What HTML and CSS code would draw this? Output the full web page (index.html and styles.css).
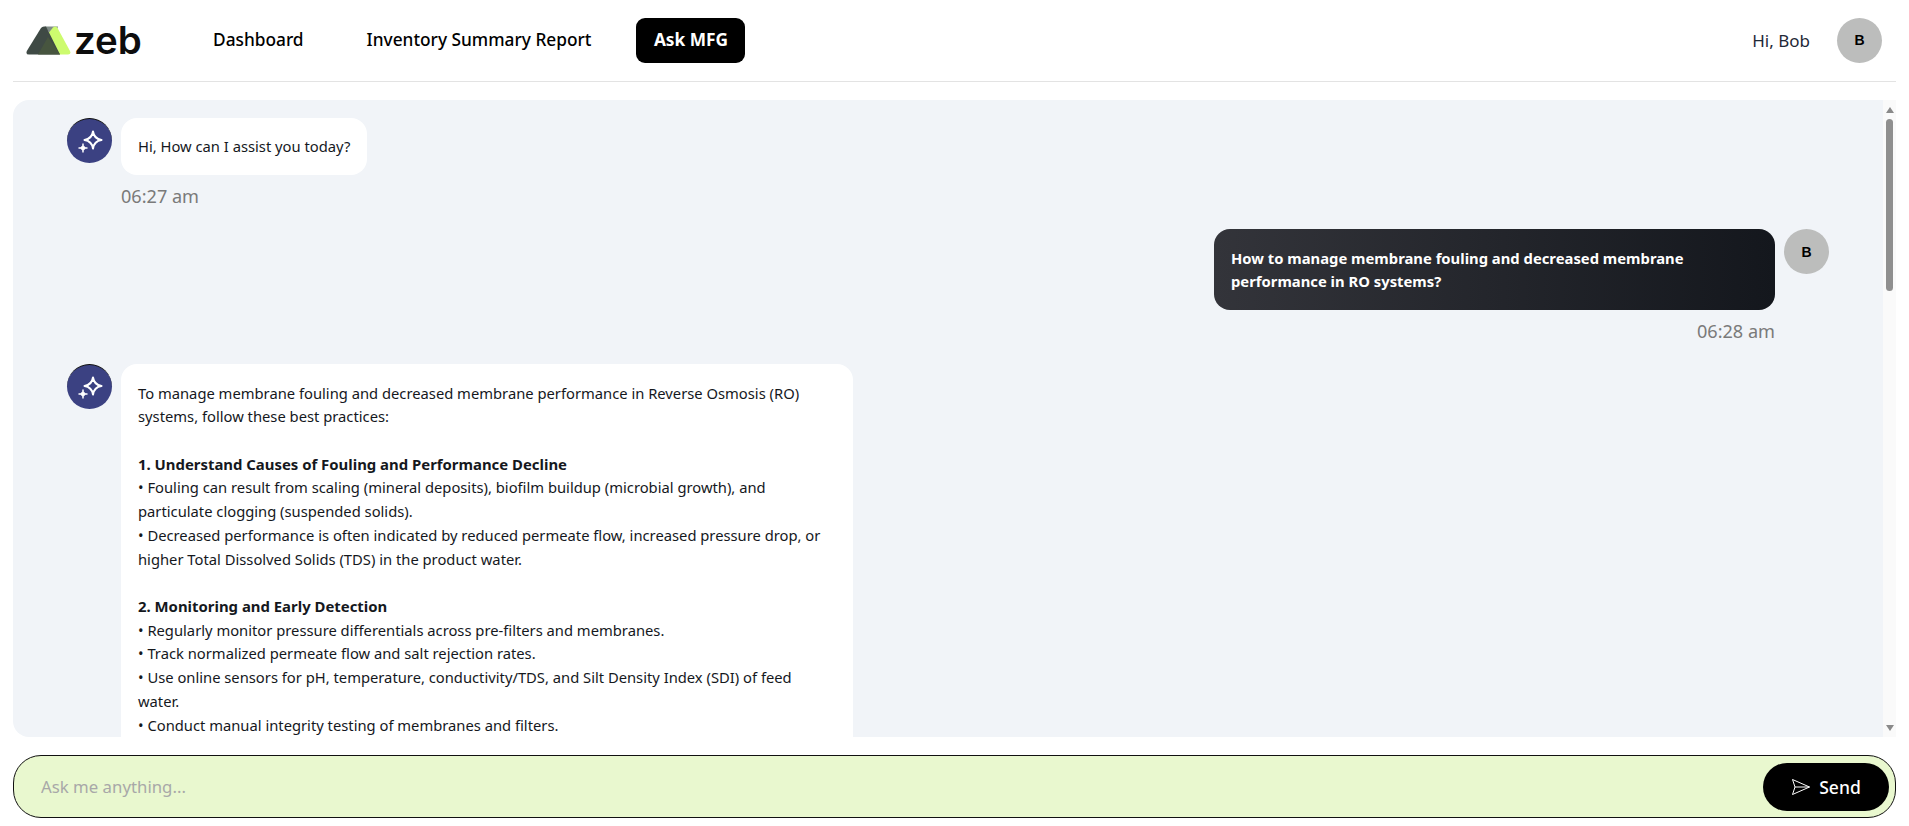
FILE: index.html
```html
<!DOCTYPE html>
<html lang="en">
<head>
<meta charset="utf-8">
<title>Ask MFG</title>
<link rel="stylesheet" href="styles.css">
</head>
<body>
<div class="app">
  <header class="topbar">
    <div class="brand">
      <svg class="brand-mark" width="45" height="29" viewBox="0 0 45 29">
        <path d="M19 0.5 L32 0.5 L28 14 Z" fill="#7f8b86"/>
        <path d="M27 1.5 Q29.5 -0.5 31.5 2 L44 25 Q45.5 28.5 42 28.5 L33 28.5 L21 9 Z" fill="#cdfb6e"/>
        <path d="M15 2 Q16 0.5 18 0.5 L20 0.5 L34 28.5 L3 28.5 Q-0.5 28.5 0.8 25 Z" fill="#3f4a45"/>
        <path d="M22 11 L34 28.5 L12 28.5 Z" fill="#47553f"/>
      </svg>
      <span class="brand-name">zeb</span>
    </div>
    <nav class="nav">
      <a class="nav-link">Dashboard</a>
      <a class="nav-link">Inventory Summary Report</a>
      <a class="nav-link nav-active">Ask MFG</a>
    </nav>
    <div class="user">
      <span class="greeting">Hi, Bob</span>
      <span class="avatar avatar-user">B</span>
    </div>
  </header>

  <div class="chat-frame">
    <main class="chat">
      <div class="msg">
        <span class="avatar avatar-bot">
          <svg width="45" height="45" viewBox="0 0 45 45" fill="none"><path d="M26 12.5 C26.8 17.8 29.2 20.2 34.5 21 C29.2 21.8 26.8 24.2 26 29.5 C25.2 24.2 22.8 21.8 17.5 21 C22.8 20.2 25.2 17.8 26 12.5 Z" stroke="#fff" stroke-width="2" stroke-linejoin="round"/><path d="M16 24.5 C16.4 27.5 17.5 28.6 20.5 29 C17.5 29.4 16.4 30.5 16 33.5 C15.6 30.5 14.5 29.4 11.5 29 C14.5 28.6 15.6 27.5 16 24.5 Z" fill="#fff" stroke="#fff" stroke-width=".8" stroke-linejoin="round"/></svg>
        </span>
        <div class="msg-body">
          <div class="bubble">Hi, How can I assist you today?</div>
          <div class="time">06:27 am</div>
        </div>
      </div>

      <div class="msg msg-out">
        <div class="msg-body">
          <div class="bubble bubble-out">How to manage membrane fouling and decreased membrane performance in RO systems?</div>
          <div class="time">06:28 am</div>
        </div>
        <span class="avatar avatar-user">B</span>
      </div>

      <div class="msg">
        <span class="avatar avatar-bot">
          <svg width="45" height="45" viewBox="0 0 45 45" fill="none"><path d="M26 12.5 C26.8 17.8 29.2 20.2 34.5 21 C29.2 21.8 26.8 24.2 26 29.5 C25.2 24.2 22.8 21.8 17.5 21 C22.8 20.2 25.2 17.8 26 12.5 Z" stroke="#fff" stroke-width="2" stroke-linejoin="round"/><path d="M16 24.5 C16.4 27.5 17.5 28.6 20.5 29 C17.5 29.4 16.4 30.5 16 33.5 C15.6 30.5 14.5 29.4 11.5 29 C14.5 28.6 15.6 27.5 16 24.5 Z" fill="#fff" stroke="#fff" stroke-width=".8" stroke-linejoin="round"/></svg>
        </span>
        <div class="msg-body">
          <div class="bubble bubble-long">To manage membrane fouling and decreased membrane performance in Reverse Osmosis (RO) systems, follow these best practices:<br><br><b>1. Understand Causes of Fouling and Performance Decline</b><br>• Fouling can result from scaling (mineral deposits), biofilm buildup (microbial growth), and particulate clogging (suspended solids).<br>• Decreased performance is often indicated by reduced permeate flow, increased pressure drop, or higher Total Dissolved Solids (TDS) in the product water.<br><br><b>2. Monitoring and Early Detection</b><br>• Regularly monitor pressure differentials across pre-filters and membranes.<br>• Track normalized permeate flow and salt rejection rates.<br>• Use online sensors for pH, temperature, conductivity/TDS, and Silt Density Index (SDI) of feed water.<br>• Conduct manual integrity testing of membranes and filters.</div>
        </div>
      </div>
    </main>
    <div class="scrollbar" aria-hidden="true">
      <span class="scroll-arrow scroll-up"></span>
      <span class="scroll-thumb"></span>
      <span class="scroll-arrow scroll-down"></span>
    </div>
  </div>

  <form class="composer">
    <input class="composer-input" type="text" placeholder="Ask me anything...">
    <button class="send" type="button">
      <svg width="20" height="18" viewBox="0 0 20 18" fill="none"><path d="M1.5 1.5 L18.5 9 L1.5 16.5 L4 9 Z M4 9 L18.5 9" stroke="#fff" stroke-width="1" stroke-linejoin="round"/></svg>
      <span>Send</span>
    </button>
  </form>
</div>
</body>
</html>
```
FILE: styles.css
```css
* { box-sizing: border-box; }
html, body { height: 100%; }
body {
  margin: 0;
  background: #fff;
  color: #15181d;
  font-family: "Noto Sans", "Open Sans", sans-serif;
  overflow: hidden;
}
.app {
  height: 826px;
  padding: 0 13px;
  display: flex;
  flex-direction: column;
}
.topbar {
  height: 82px;
  flex: none;
  display: flex;
  align-items: center;
  border-bottom: 1px solid #e3e3e3;
  padding: 0 14px 1px 13px;
}
.brand { display: flex; align-items: center; gap: 3px; width: 187px; }
.brand-mark { display: block; }
.brand-name {
  font-family: Inter, sans-serif;
  font-weight: 600;
  font-size: 38.5px;
  line-height: 40px;
  color: #0d0d0d;
}
.nav { display: flex; align-items: center; gap: 45px; flex: 1; }
.nav-link {
  font-size: 17.3px;
  font-weight: 500;
  color: #000;
  white-space: nowrap;
  margin-right: 18px;
  padding-bottom: 2px;
}
.nav-link + .nav-link + .nav-link { margin-left: -18px; }
.nav-active {
  margin-right: 0;
  background: #000;
  color: #fff;
  font-weight: 700;
  height: 45px;
  width: 109px;
  border-radius: 9px;
  display: flex;
  align-items: center;
  justify-content: center;
}
.user { display: flex; align-items: center; gap: 27px; }
.greeting { font-size: 17px; color: #1f2937; }
.avatar {
  width: 45px;
  height: 45px;
  border-radius: 50%;
  flex: none;
  display: flex;
  align-items: center;
  justify-content: center;
}
.avatar-user {
  background: #bcbdbc;
  color: #000;
  font: 700 14px "Liberation Sans", sans-serif;
}
.avatar-bot { background: #3b4182; border-top: 1px solid #111; }
.chat-frame {
  flex: none;
  height: 637px;
  margin-top: 18px;
  display: flex;
}
.chat {
  flex: 1;
  min-width: 0;
  padding: 18px 54px 0 54px;
  background: #f1f4f8;
  border-radius: 16px 0 0 16px;
  overflow: hidden;
}
.scrollbar {
  flex: none;
  width: 13px;
  background: #fafafa;
  display: flex;
  flex-direction: column;
  align-items: center;
  padding: 7px 0 6px;
}
.scroll-arrow {
  flex: none;
  width: 0;
  height: 0;
  border-left: 4px solid transparent;
  border-right: 4px solid transparent;
}
.scroll-up { border-bottom: 6px solid #8a8a8a; }
.scroll-down { border-top: 6px solid #8a8a8a; margin-top: auto; }
.scroll-thumb {
  flex: none;
  width: 7px;
  height: 172px;
  margin-top: 6px;
  background: #8f8f8f;
  border-radius: 3.5px;
}
.msg { display: flex; gap: 9px; margin-bottom: 19px; align-items: flex-start; }
.msg-out { justify-content: flex-end; }
.bubble {
  background: #fff;
  border-radius: 16px;
  padding: 17.4px 17px 16.2px;
  font-size: 14.75px;
  line-height: 23.7px;
  color: #15181d;
  width: fit-content;
}
.bubble b { font-size: 14.9px; }
.bubble-long { width: 732px; min-height: 1600px; padding-right: 24px; }
.bubble-out {
  width: 561px;
  color: #fff;
  font-size: 14.8px;
  font-weight: 700;
  background: linear-gradient(90deg, #33343a, #14171d);
}
.time {
  height: 35px;
  line-height: 42px;
  font-size: 18.1px;
  color: #7a7a7a;
}
.msg-out .time { text-align: right; }
.composer {
  flex: none;
  height: 63px;
  margin-top: 18px;
  background: #e9f8cf;
  border: 1px solid #111;
  border-radius: 28px;
  display: flex;
  align-items: center;
  padding: 0 6px 0 27px;
}
.composer-input {
  flex: 1;
  border: 0;
  outline: 0;
  padding: 0;
  background: transparent;
  font: 400 16.8px "Noto Sans", sans-serif;
  color: #111;
}
.composer-input::placeholder { color: #a8a8a8; opacity: 1; }
.send {
  width: 126px;
  height: 48px;
  border: 0;
  border-radius: 24px;
  background: #000;
  color: #fff;
  font: 500 17.5px "Noto Sans", sans-serif;
  display: flex;
  align-items: center;
  justify-content: center;
  gap: 8px;
}
```
